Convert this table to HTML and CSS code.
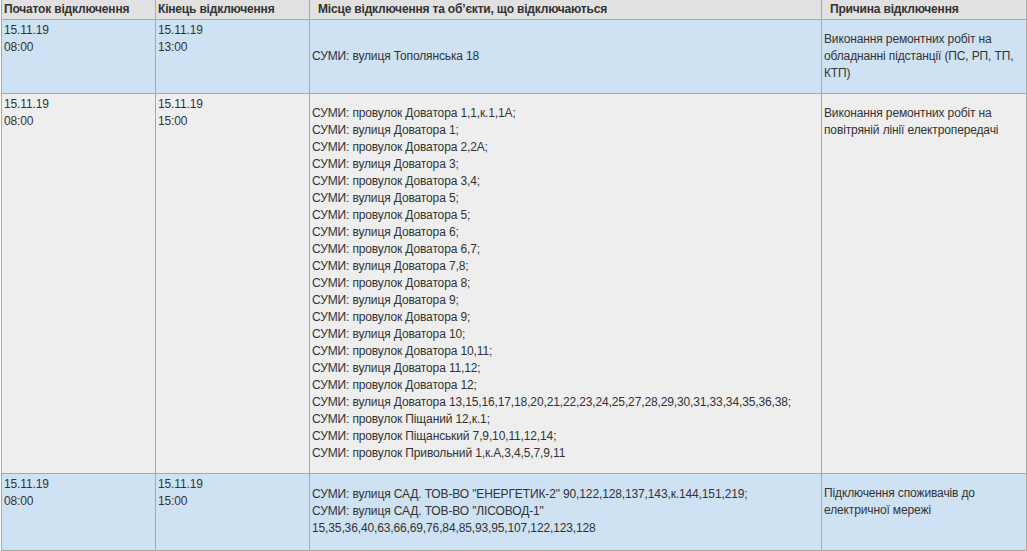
FILE: index.html
```html
<!DOCTYPE html>
<html lang="uk">
<head>
    <meta charset="UTF-8">
    <meta name="viewport" content="width=device-width, initial-scale=1.0">
    <title>Планові відключення</title>
    <link rel="stylesheet" href="styles.css">
</head>
<body>
<table class="outages">
    <colgroup>
        <col class="col-date">
        <col class="col-date">
        <col class="col-place">
        <col class="col-reason">
    </colgroup>
    <thead>
    <tr>
        <th>Початок відключення</th>
        <th>Кінець відключення</th>
        <th class="wide">Місце відключення та об’єкти, що відключаються</th>
        <th class="wide">Причина відключення</th>
    </tr>
    </thead>
    <tbody>
    <tr class="odd">
        <td class="date">15.11.19<br>08:00</td>
        <td class="date">15.11.19<br>13:00</td>
        <td class="place">СУМИ: вулиця Тополянська 18</td>
        <td class="reason">Виконання ремонтних робіт на обладнанні підстанції (ПС, РП, ТП, КТП)</td>
    </tr>
    <tr class="even">
        <td class="date">15.11.19<br>08:00</td>
        <td class="date">15.11.19<br>15:00</td>
        <td class="place">
            СУМИ: провулок Доватора 1,1,к.1,1А;<br>
            СУМИ: вулиця Доватора 1;<br>
            СУМИ: провулок Доватора 2,2А;<br>
            СУМИ: вулиця Доватора 3;<br>
            СУМИ: провулок Доватора 3,4;<br>
            СУМИ: вулиця Доватора 5;<br>
            СУМИ: провулок Доватора 5;<br>
            СУМИ: вулиця Доватора 6;<br>
            СУМИ: провулок Доватора 6,7;<br>
            СУМИ: вулиця Доватора 7,8;<br>
            СУМИ: провулок Доватора 8;<br>
            СУМИ: вулиця Доватора 9;<br>
            СУМИ: провулок Доватора 9;<br>
            СУМИ: вулиця Доватора 10;<br>
            СУМИ: провулок Доватора 10,11;<br>
            СУМИ: вулиця Доватора 11,12;<br>
            СУМИ: провулок Доватора 12;<br>
            СУМИ: вулиця Доватора 13,15,16,17,18,20,21,22,23,24,25,27,28,29,30,31,33,34,35,36,38;<br>
            СУМИ: провулок Піщаний 12,к.1;<br>
            СУМИ: провулок Піщанський 7,9,10,11,12,14;<br>
            СУМИ: провулок Привольний 1,к.А,3,4,5,7,9,11
        </td>
        <td class="reason">Виконання ремонтних робіт на повітряній лінії електропередачі</td>
    </tr>
    <tr class="odd">
        <td class="date">15.11.19<br>08:00</td>
        <td class="date">15.11.19<br>15:00</td>
        <td class="place tall">
            СУМИ: вулиця САД. ТОВ-ВО "ЕНЕРГЕТИК-2" 90,122,128,137,143,к.144,151,219;<br>
            СУМИ: вулиця САД. ТОВ-ВО "ЛІСОВОД-1"<br>
            15,35,36,40,63,66,69,76,84,85,93,95,107,122,123,128
        </td>
        <td class="reason">Підключення споживачів до електричної мережі</td>
    </tr>
    <tr class="even">
        <td class="date">15.11.19<br>09:00</td>
        <td class="date">15.11.19<br>16:00</td>
        <td class="place">СУМИ: вулиця Харківська 2</td>
        <td class="reason">Виконання ремонтних робіт на повітряній лінії електропередачі</td>
    </tr>
    </tbody>
</table>
</body>
</html>
```

FILE: styles.css
```css
:root {
    --border-color: #a8a8a8;
    --head-color: #e1e1e1;
    --odd-color: #cfe2f3;
    --even-color: #eeeeee;
    --text-color: #333;
}

body {
    margin: 0;
    padding: 0;
    background-color: #fff;
    font-family: 'Liberation Sans', Arial, sans-serif;
    font-size: 12px;
    line-height: 17px;
    color: var(--text-color);
}

.outages {
    border-collapse: collapse;
    table-layout: fixed;
    width: 1025px;
    margin-left: 1px;
}

.col-date {
    width: 154px;
}

.col-place {
    width: 512px;
}

.col-reason {
    width: 205px;
}

.outages th,
.outages td {
    border: 1px solid var(--border-color);
    text-align: left;
    letter-spacing: -0.13px;
}

.outages th {
    border-top: none;
    padding: 1px 2px;
    background-color: var(--head-color);
    font-weight: bold;
    font-size: 12px;
    letter-spacing: -0.18px;
}

.outages th.wide {
    padding-left: 8px;
}

.odd td {
    background-color: var(--odd-color);
}

.even td {
    background-color: var(--even-color);
}

.date {
    vertical-align: top;
    padding: 2px 2px;
}

.place {
    vertical-align: middle;
    padding: 11px 2px;
}

.place.tall {
    padding: 12px 2px 13px;
}

.reason {
    vertical-align: top;
    padding: 11px 2px;
}
```
